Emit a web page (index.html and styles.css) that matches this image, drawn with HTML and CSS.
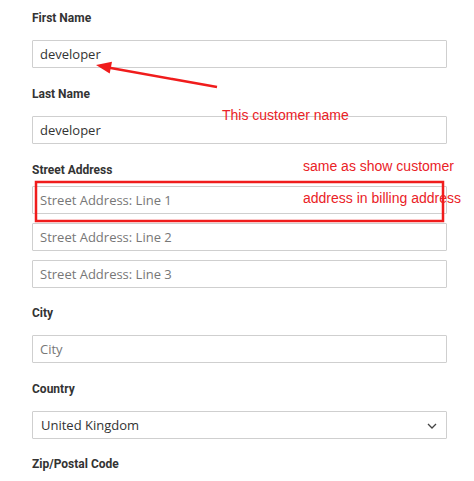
FILE: index.html
```html
<!DOCTYPE html>
<html lang="en">
<head>
    <meta charset="UTF-8">
    <meta name="viewport" content="width=device-width, initial-scale=1.0">
    <title>Billing Address</title>
    <link rel="stylesheet" href="styles.css">
</head>
<body>

<div class="form">
    <div class="field">
        <label>First Name</label>
        <input type="text" value="developer">
    </div>

    <div class="field">
        <label>Last Name</label>
        <input type="text" value="developer">
    </div>

    <fieldset class="field street">
        <legend>Street Address</legend>
        <input type="text" placeholder="Street Address: Line 1">
        <input type="text" placeholder="Street Address: Line 2">
        <input type="text" placeholder="Street Address: Line 3">
    </fieldset>

    <div class="field city">
        <label>City</label>
        <input type="text" placeholder="City">
    </div>

    <div class="field country">
        <label>Country</label>
        <div class="select">
            <select>
                <option>United Kingdom</option>
            </select>
            <svg class="chevron" width="10" height="6" viewBox="0 0 10 6">
                <path d="M1 1 L5 5 L9 1" fill="none" stroke="#444" stroke-width="1.3"/>
            </svg>
        </div>
    </div>

    <div class="field">
        <label>Zip/Postal Code</label>
    </div>
</div>

<!-- annotations drawn on top of the screenshot -->
<svg class="notes" width="474" height="481" viewBox="0 0 474 481">
    <line x1="217" y1="87" x2="108" y2="67.5" stroke="#f01c1c" stroke-width="2.5"/>
    <polygon points="96,65 112,61.8 109.7,73.6" fill="#f01c1c"/>
    <text x="222" y="120">This customer name</text>
    <text x="303" y="171">same as show customer</text>
    <text x="303" y="203">address in billing address</text>
    <rect x="36" y="182" width="407" height="39" fill="none" stroke="#f01c1c" stroke-width="2.5"/>
</svg>

</body>
</html>
```

FILE: styles.css
```css
body {
    margin: 0;
    background-color: #fff;
    font-family: "Open Sans", sans-serif;
}
.form {
    padding: 10px 27px 0 32px;
}
.field {
    margin: 0 0 18px 0;
}
.field label,
.field legend {
    display: block;
    font-family: Roboto, "Liberation Sans", sans-serif;
    font-weight: 700;
    font-size: 12px;
    line-height: 16px;
    color: #333;
    margin-bottom: 14px;
}
.field input,
.field select {
    display: block;
    width: 100%;
    height: 28px;
    box-sizing: border-box;
    border: 1px solid #cfcfcf;
    border-radius: 1px;
    padding: 0 7px;
    font-family: "Open Sans", sans-serif;
    font-size: 13px;
    color: #333;
    background-color: #fff;
    outline: none;
}
.field input::placeholder {
    color: #777;
}
.street {
    border: none;
    padding: 0;
    min-width: 0;
    margin-bottom: 17px;
}
.street legend {
    padding: 0;
    margin-bottom: 8px;
}
.street input {
    margin-bottom: 9px;
}
.street input:last-child {
    margin-bottom: 0;
}
.city {
    margin-bottom: 18px;
}
.country {
    margin-bottom: 17px;
}
.select {
    position: relative;
}
.select select {
    appearance: none;
    -webkit-appearance: none;
    padding-left: 8px;
}
.chevron {
    position: absolute;
    right: 10px;
    top: 12px;
}
.notes {
    position: absolute;
    left: 0;
    top: 0;
    pointer-events: none;
}
.notes text {
    font-family: "Liberation Sans", Arial, sans-serif;
    font-size: 14px;
    fill: #ea2227;
}
```
